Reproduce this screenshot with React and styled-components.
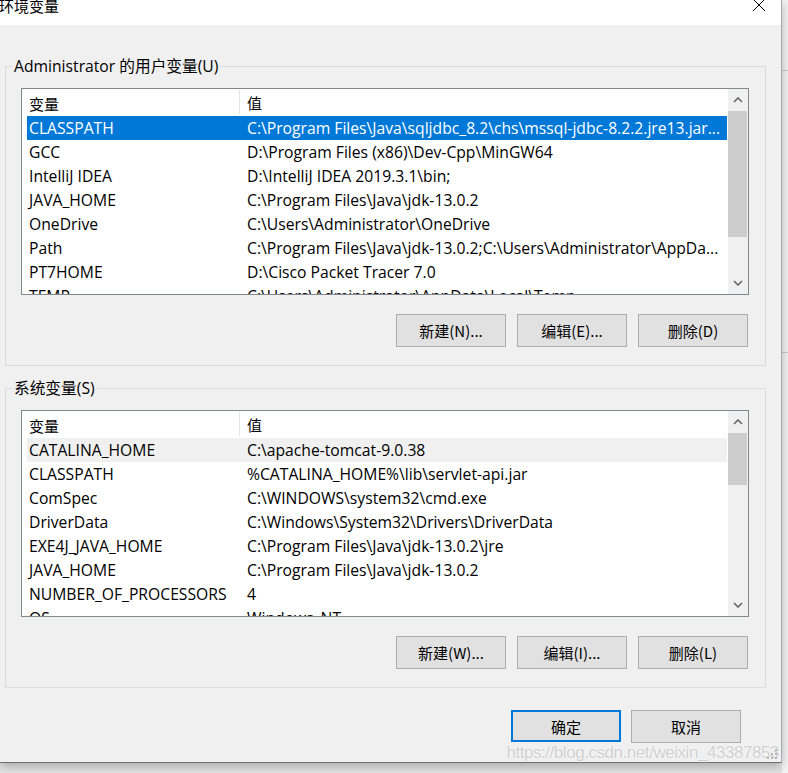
import styled, { createGlobalStyle } from "styled-components";

const GlobalStyle = createGlobalStyle`
  html, body {
    margin: 0;
    padding: 0;
    background: #e4e4e4;
  }
  body {
    font-family: "Open Sans", "Noto Sans CJK SC", sans-serif;
    font-size: 15.7px;
    color: #000;
    overflow: hidden;
  }
`;

const userVars = [
  ["CLASSPATH", "C:\\Program Files\\Java\\sqljdbc_8.2\\chs\\mssql-jdbc-8.2.2.jre13.jar..."],
  ["GCC", "D:\\Program Files (x86)\\Dev-Cpp\\MinGW64"],
  ["IntelliJ IDEA", "D:\\IntelliJ IDEA 2019.3.1\\bin;"],
  ["JAVA_HOME", "C:\\Program Files\\Java\\jdk-13.0.2"],
  ["OneDrive", "C:\\Users\\Administrator\\OneDrive"],
  ["Path", "C:\\Program Files\\Java\\jdk-13.0.2;C:\\Users\\Administrator\\AppDa..."],
  ["PT7HOME", "D:\\Cisco Packet Tracer 7.0"],
  ["TEMP", "C:\\Users\\Administrator\\AppData\\Local\\Temp"],
];

const systemVars = [
  ["CATALINA_HOME", "C:\\apache-tomcat-9.0.38"],
  ["CLASSPATH", "%CATALINA_HOME%\\lib\\servlet-api.jar"],
  ["ComSpec", "C:\\WINDOWS\\system32\\cmd.exe"],
  ["DriverData", "C:\\Windows\\System32\\Drivers\\DriverData"],
  ["EXE4J_JAVA_HOME", "C:\\Program Files\\Java\\jdk-13.0.2\\jre"],
  ["JAVA_HOME", "C:\\Program Files\\Java\\jdk-13.0.2"],
  ["NUMBER_OF_PROCESSORS", "4"],
  ["OS", "Windows_NT"],
];

const Page = styled.div`
  display: flex;
  align-items: flex-start;
  width: 788px;
  height: 773px;
  overflow: hidden;
`;

const Dialog = styled.div`
  position: relative;
  display: flex;
  flex-direction: column;
  width: 781px;
  height: 762px;
  flex-shrink: 0;
  background: #f0f0f0;
  border-right: 1px solid #a9a9a9;
  border-bottom: 1px solid #6f6f6f;
  box-shadow: 0 3px 10px rgba(0, 0, 0, 0.28);
`;

const BackWindow = styled.div`
  flex: 1;
  height: 773px;
  background: #f4f4f4;

  .line {
    border-bottom: 1px solid #cdcdcd;
  }
`;

const TitleBar = styled.div`
  display: flex;
  justify-content: space-between;
  align-items: flex-start;
  height: 25px;
  background: #fff;
  overflow: hidden;
`;

const Title = styled.div`
  margin: -3px 0 0 -1px;
  font-family: "Noto Sans CJK SC", sans-serif;
  font-size: 15px;
  line-height: 17px;
`;

const CloseIcon = styled.svg`
  margin: -2px 15px 0 0;
`;

const Body = styled.div`
  display: flex;
  flex-direction: column;
  padding: 41px 15px 0 5px;
`;

const Group = styled.div`
  position: relative;
  display: flex;
  flex-direction: column;
  gap: 19px;
  margin-bottom: 22px;
  padding: 21px 16px 18px 15px;
  border: 1px solid #dcdcdc;
`;

const GroupLabel = styled.span`
  position: absolute;
  top: -11px;
  left: 6px;
  padding: 0 2px;
  line-height: 20px;
  background: #f0f0f0;
  white-space: nowrap;
`;

const ListBox = styled.div`
  display: flex;
  height: 205px;
  background: #fff;
  border: 1px solid #828790;
`;

const ListContent = styled.div`
  flex: 1;
  overflow: hidden;
`;

const Columns = styled.div`
  display: grid;
  grid-template-columns: 212px 1fr;
  margin: 0 1px 0 5px;
  height: ${(p) => p.$height}px;
  align-items: center;
  white-space: nowrap;
  overflow: hidden;
  background: ${(p) =>
    p.$state === "selected" ? "#0078d7" : p.$state === "hot" ? "#f0f0f0" : "transparent"};
  color: ${(p) => (p.$state === "selected" ? "#fff" : "#000")};
`;

const NameCell = styled.div`
  padding-left: 2px;
  overflow: hidden;
`;

const ValueCell = styled.div`
  padding-left: 8px;
  overflow: hidden;
`;

const HeadName = styled.div`
  padding-left: 2px;
  font-family: "Noto Sans CJK SC", sans-serif;
  font-size: 15px;
  margin-top: 1px;
`;

const HeadValue = styled.div`
  align-self: stretch;
  display: flex;
  align-items: center;
  padding-left: 7px;
  margin: 1px 0 2px;
  border-left: 1px solid #e5e5e5;
  font-family: "Noto Sans CJK SC", sans-serif;
  font-size: 15px;
`;

const ScrollBar = styled.div`
  display: flex;
  flex-direction: column;
  width: 20px;
  background: #f0f0f0;
`;

const ArrowButton = styled.div`
  display: flex;
  align-items: center;
  justify-content: center;
  height: 22px;
  flex-shrink: 0;
`;

const Thumb = styled.div`
  height: ${(p) => p.$size}px;
  margin-right: 1px;
  background: #cdcdcd;
`;

const Spacer = styled.div`
  flex: 1;
`;

const ButtonRow = styled.div`
  display: flex;
  justify-content: flex-end;
  gap: ${(p) => p.$gap}px;
  margin-right: ${(p) => p.$right}px;
`;

const Button = styled.button`
  width: 110px;
  height: ${(p) => (p.$primary ? 32 : 33)}px;
  padding: 0;
  background: #e1e1e1;
  border: ${(p) => (p.$primary ? "2px solid #0078d7" : "1px solid #adadad")};
  border-radius: 0;
  font-family: "Noto Sans CJK SC", "Open Sans", sans-serif;
  font-size: 15px;
  color: #000;
`;

const Watermark = styled.div`
  position: absolute;
  right: 2px;
  bottom: 0;
  font-family: "Liberation Sans", sans-serif;
  font-size: 17px;
  line-height: 18px;
  color: #cfcfcf;
  text-shadow: 0 0 2px #fff, 0 0 1px #fff;
  letter-spacing: -0.45px;
  pointer-events: none;
`;

const Grip = styled.svg`
  position: absolute;
  right: 3px;
  bottom: 2px;
`;

const Chevron = ({ up }) => (
  <svg width="10" height="6" viewBox="0 0 10 6">
    <polyline
      points={up ? "1,5 5,1 9,5" : "1,1 5,5 9,1"}
      fill="none"
      stroke="#606060"
      strokeWidth="1.5"
    />
  </svg>
);

const VarList = ({ rows, selected, hot, thumb }) => (
  <ListBox>
    <ListContent>
      <Columns $height={27}>
        <HeadName>变量</HeadName>
        <HeadValue>值</HeadValue>
      </Columns>
      {rows.map(([name, value], i) => (
        <Columns
          key={name + i}
          $height={24}
          $state={i === selected ? "selected" : i === hot ? "hot" : undefined}
        >
          <NameCell>{name}</NameCell>
          <ValueCell>{value}</ValueCell>
        </Columns>
      ))}
    </ListContent>
    <ScrollBar>
      <ArrowButton>
        <Chevron up />
      </ArrowButton>
      <Thumb $size={thumb} />
      <Spacer />
      <ArrowButton>
        <Chevron />
      </ArrowButton>
    </ScrollBar>
  </ListBox>
);

export default function App() {
  return (
    <Page>
      <GlobalStyle />
      <Dialog>
        <TitleBar>
          <Title>环境变量</Title>
          <CloseIcon width="14" height="14" viewBox="0 0 14 14">
            <path d="M1 1 L13 13 M13 1 L1 13" stroke="#000" strokeWidth="1" />
          </CloseIcon>
        </TitleBar>

        <Body>
          <Group>
            <GroupLabel>Administrator 的用户变量(U)</GroupLabel>
            <VarList rows={userVars} selected={0} thumb={126} />
            <ButtonRow $gap={11} $right={1}>
              <Button>新建(N)...</Button>
              <Button>编辑(E)...</Button>
              <Button>删除(D)</Button>
            </ButtonRow>
          </Group>

          <Group>
            <GroupLabel>系统变量(S)</GroupLabel>
            <VarList rows={systemVars} hot={0} thumb={52} />
            <ButtonRow $gap={11} $right={1}>
              <Button>新建(W)...</Button>
              <Button>编辑(I)...</Button>
              <Button>删除(L)</Button>
            </ButtonRow>
          </Group>

          <ButtonRow $gap={10} $right={25}>
            <Button $primary>确定</Button>
            <Button>取消</Button>
          </ButtonRow>
        </Body>

        <Watermark>https://blog.csdn.net/weixin_43387853</Watermark>
        <Grip width="12" height="12" viewBox="0 0 12 12">
          <g fill="#b4b4b4">
            <rect x="9" y="1" width="2" height="2" />
            <rect x="5" y="5" width="2" height="2" />
            <rect x="9" y="5" width="2" height="2" />
            <rect x="1" y="9" width="2" height="2" />
            <rect x="5" y="9" width="2" height="2" />
            <rect x="9" y="9" width="2" height="2" />
          </g>
        </Grip>
      </Dialog>
      <BackWindow>
        <div className="line" style={{ height: 70 }} />
        <div className="line" style={{ height: 281 }} />
      </BackWindow>
    </Page>
  );
}
